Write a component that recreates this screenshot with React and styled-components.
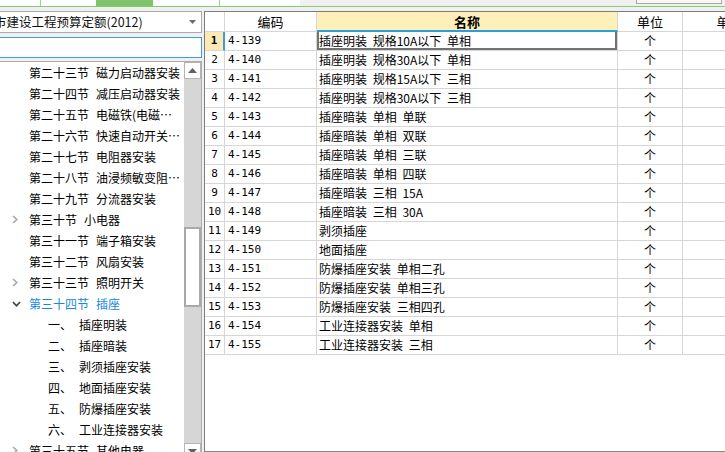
import React from 'react';
import styled, { createGlobalStyle } from 'styled-components';

const GlobalStyle = createGlobalStyle`
  html, body {
    margin: 0;
    padding: 0;
    background: #f0f0f0;
    overflow: hidden;
  }
  body {
    font-family: "Noto Sans CJK SC", "Liberation Sans", sans-serif;
    font-size: 12px;
    color: #000;
  }
`;

const treeItems = [
  { label: '第二十三节', title: '磁力启动器安装' },
  { label: '第二十四节', title: '减压启动器安装' },
  { label: '第二十五节', title: '电磁铁(电磁开关)安装' },
  { label: '第二十六节', title: '快速自动开关安装' },
  { label: '第二十七节', title: '电阻器安装' },
  { label: '第二十八节', title: '油浸频敏变阻器安装' },
  { label: '第二十九节', title: '分流器安装' },
  { label: '第三十节', title: '小电器', twisty: 'closed' },
  { label: '第三十一节', title: '端子箱安装' },
  { label: '第三十二节', title: '风扇安装' },
  { label: '第三十三节', title: '照明开关', twisty: 'closed' },
  { label: '第三十四节', title: '插座', twisty: 'open', active: true },
  { order: '一、', title: '插座明装' },
  { order: '二、', title: '插座暗装' },
  { order: '三、', title: '剥须插座安装' },
  { order: '四、', title: '地面插座安装' },
  { order: '五、', title: '防爆插座安装' },
  { order: '六、', title: '工业连接器安装' },
  { label: '第三十五节', title: '其他电器', twisty: 'closed' },
];

const rows = [
  ['4-139', '插座明装 规格10A以下 单相'],
  ['4-140', '插座明装 规格30A以下 单相'],
  ['4-141', '插座明装 规格15A以下 三相'],
  ['4-142', '插座明装 规格30A以下 三相'],
  ['4-143', '插座暗装 单相 单联'],
  ['4-144', '插座暗装 单相 双联'],
  ['4-145', '插座暗装 单相 三联'],
  ['4-146', '插座暗装 单相 四联'],
  ['4-147', '插座暗装 三相 15A'],
  ['4-148', '插座暗装 三相 30A'],
  ['4-149', '剥须插座'],
  ['4-150', '地面插座'],
  ['4-151', '防爆插座安装 单相二孔'],
  ['4-152', '防爆插座安装 单相三孔'],
  ['4-153', '防爆插座安装 三相四孔'],
  ['4-154', '工业连接器安装 单相'],
  ['4-155', '工业连接器安装 三相'],
];

const App = () => {
  return (
    <Frame>
      <GlobalStyle />
      <TabStrip>
        <TabArea>
          <Tab width={41} divider />
          <Tab width={55} />
          <Tab width={57} active />
          <Tab width={67} divider />
          <Tab width={80} />
        </TabArea>
        <CornerBox />
      </TabStrip>

      <Body>
        <LeftPanel>
          <Select>
            <SelectText>市建设工程预算定额(2012)</SelectText>
            <svg width="7" height="4" viewBox="0 0 7 4">
              <path d="M0 0 H7 L3.5 4 Z" fill="#6d6d6d" />
            </svg>
          </Select>
          <Search />
          <Tree>
            <TreeList>
              {treeItems.map((item, i) =>
                item.order ? (
                  <ChildRow key={i}>
                    <Order>{item.order}</Order>
                    <ItemText>{item.title}</ItemText>
                  </ChildRow>
                ) : (
                  <TreeRow key={i} active={item.active}>
                    <Twisty>
                      {item.twisty === 'closed' && (
                        <svg width="6" height="9" viewBox="0 0 6 9">
                          <polyline points="1,1 4.8,4.5 1,8" fill="none" stroke="#a6a6a6" strokeWidth="1.6" />
                        </svg>
                      )}
                      {item.twisty === 'open' && (
                        <svg width="9" height="6" viewBox="0 0 9 6">
                          <polyline points="1,1 4.5,4.8 8,1" fill="none" stroke="#3f3f3f" strokeWidth="1.6" />
                        </svg>
                      )}
                    </Twisty>
                    <ItemText>
                      {item.label}
                      <Title>{item.title}</Title>
                    </ItemText>
                  </TreeRow>
                )
              )}
            </TreeList>
            <ScrollBar>
              <ScrollButton>
                <svg width="9" height="5" viewBox="0 0 9 5">
                  <path d="M0 5 L4.5 0 L9 5 Z" fill="#606060" />
                </svg>
              </ScrollButton>
              <Thumb />
              <ScrollButton bottom>
                <svg width="9" height="5" viewBox="0 0 9 5">
                  <path d="M0 0 L4.5 5 L9 0 Z" fill="#606060" />
                </svg>
              </ScrollButton>
            </ScrollBar>
          </Tree>
        </LeftPanel>

        <GridPanel>
          <GridRow header>
            <HeadCell />
            <HeadCell>编码</HeadCell>
            <HeadCell focused>名称</HeadCell>
            <HeadCell>单位</HeadCell>
            <HeadCell>单位</HeadCell>
          </GridRow>
          {rows.map(([code, name], i) => (
            <GridRow key={code}>
              <NumCell current={i === 0}>{i + 1}</NumCell>
              <CodeCell>{code}</CodeCell>
              <NameCell selected={i === 0}>{name}</NameCell>
              <UnitCell>个</UnitCell>
              <Cell />
            </GridRow>
          ))}
        </GridPanel>
      </Body>
    </Frame>
  );
};

const Frame = styled.div`
  width: 725px;
  height: 452px;
  overflow: hidden;
  display: flex;
  flex-direction: column;
  background: #f0f0f0;
`;

const TabStrip = styled.div`
  display: flex;
  height: 6px;
  border-bottom: 1px solid #86cc6e;
  flex-shrink: 0;
`;

const TabArea = styled.div`
  display: flex;
  width: 300px;
  background: #fff;
`;

const Tab = styled.div`
  width: ${(p) => p.width}px;
  box-sizing: border-box;
  background: ${(p) => (p.active ? '#7fc46b' : 'transparent')};
  border-right: ${(p) => (p.divider ? '1px solid #9ad68a' : 'none')};
`;

const CornerBox = styled.div`
  margin-left: auto;
  margin-right: 3px;
  width: 84px;
  height: 3px;
  background: #f7f7f7;
  border: 1px solid #a9a9a9;
  border-top: none;
`;

const Body = styled.div`
  display: flex;
  gap: 2px;
  padding-top: 4px;
  flex: 1;
  min-height: 0;
`;

const LeftPanel = styled.div`
  width: 202px;
  flex-shrink: 0;
  display: flex;
  flex-direction: column;
`;

const Select = styled.div`
  height: 22px;
  flex-shrink: 0;
  box-sizing: border-box;
  background: #fff;
  border: 1px solid #acacac;
  border-left: none;
  display: flex;
  align-items: center;
  padding-right: 5px;
  overflow: hidden;
`;

const SelectText = styled.div`
  flex: 1;
  margin-left: -6px;
  font-size: 12.5px;
  line-height: 20px;
  white-space: nowrap;
  color: #111;
`;

const Search = styled.div`
  height: 21px;
  flex-shrink: 0;
  box-sizing: border-box;
  margin-top: 4px;
  background: #fff;
  border: 1px solid #3a9fe0;
  border-left: none;
`;

const Tree = styled.div`
  margin-top: 3px;
  height: 400px;
  box-sizing: border-box;
  background: #fff;
  border: 1px solid #acacac;
  border-left: none;
  display: flex;
  flex-shrink: 0;
`;

const TreeList = styled.div`
  flex: 1;
  min-width: 0;
`;

const TreeRow = styled.div`
  display: flex;
  align-items: center;
  height: 21px;
  padding-left: 10px;
  color: ${(p) => (p.active ? '#1787e6' : '#000')};
`;

const ChildRow = styled.div`
  display: flex;
  align-items: center;
  height: 21px;
  padding-left: 48px;
`;

const Twisty = styled.div`
  width: 19px;
  flex-shrink: 0;
  display: flex;
  align-items: center;
  padding-left: 2px;
  box-sizing: border-box;
`;

const Order = styled.span`
  width: 31px;
  flex-shrink: 0;
  line-height: 21px;
`;

const ItemText = styled.div`
  flex: 1;
  min-width: 0;
  padding-right: 2px;
  line-height: 21px;
  white-space: nowrap;
  overflow: hidden;
  text-overflow: ellipsis;
`;

const Title = styled.span`
  margin-left: 7px;
`;

const ScrollBar = styled.div`
  width: 17px;
  flex-shrink: 0;
  display: flex;
  flex-direction: column;
  background: #d6d6d6;
`;

const ScrollButton = styled.div`
  height: 17px;
  flex-shrink: 0;
  box-sizing: border-box;
  background: #fff;
  border: 1px solid #b4b4b4;
  display: flex;
  align-items: center;
  justify-content: center;
  margin-top: ${(p) => (p.bottom ? 'auto' : '0')};
`;

const Thumb = styled.div`
  margin-top: 148px;
  height: 80px;
  flex-shrink: 0;
  box-sizing: border-box;
  background: #fff;
  border: 2px solid #a9a9a9;
`;

const GridPanel = styled.div`
  flex: 1;
  min-width: 0;
  height: 441px;
  box-sizing: border-box;
  background: #fff;
  border-left: 1px solid #7c7c7c;
  border-top: 1px solid #7c7c7c;
  border-bottom: 1px solid #8a8a8a;
  overflow: hidden;
`;

const GridRow = styled.div`
  display: grid;
  grid-template-columns: 20px 92px 301px 65px 94px;
  height: ${(p) => (p.header ? 20 : 19)}px;
`;

const Cell = styled.div`
  box-sizing: border-box;
  border-right: 1px solid #d6d6d6;
  border-bottom: 1px solid #d6d6d6;
  line-height: 18px;
  white-space: nowrap;
  overflow: hidden;
`;

const HeadCell = styled(Cell)`
  text-align: center;
  font-size: 13px;
  line-height: 19px;
  font-weight: ${(p) => (p.focused ? 700 : 400)};
  background: ${(p) => (p.focused ? '#ffefb8' : '#fff')};
  border-bottom: ${(p) => (p.focused ? '2px solid #2b9ddb' : '1px solid #d6d6d6')};
`;

const NumCell = styled(Cell)`
  text-align: center;
  font-family: "DejaVu Sans Mono", "Liberation Mono", monospace;
  font-size: 11px;
  font-weight: ${(p) => (p.current ? 700 : 400)};
  background: ${(p) => (p.current ? '#fde9b3' : '#fff')};
  border-right: ${(p) => (p.current ? '2px solid #3a9ddb' : '1px solid #d6d6d6')};
`;

const CodeCell = styled(Cell)`
  padding-left: 3px;
  font-family: "DejaVu Sans Mono", "Liberation Mono", monospace;
  font-size: 11px;
`;

const NameCell = styled(Cell)`
  padding-left: 2px;
  word-spacing: 3px;
  white-space: pre;
  box-shadow: ${(p) => (p.selected ? 'inset 2px 0 0 #727272, inset -2px -2px 0 #727272' : 'none')};
`;

const UnitCell = styled(Cell)`
  text-align: center;
`;

export default App;
